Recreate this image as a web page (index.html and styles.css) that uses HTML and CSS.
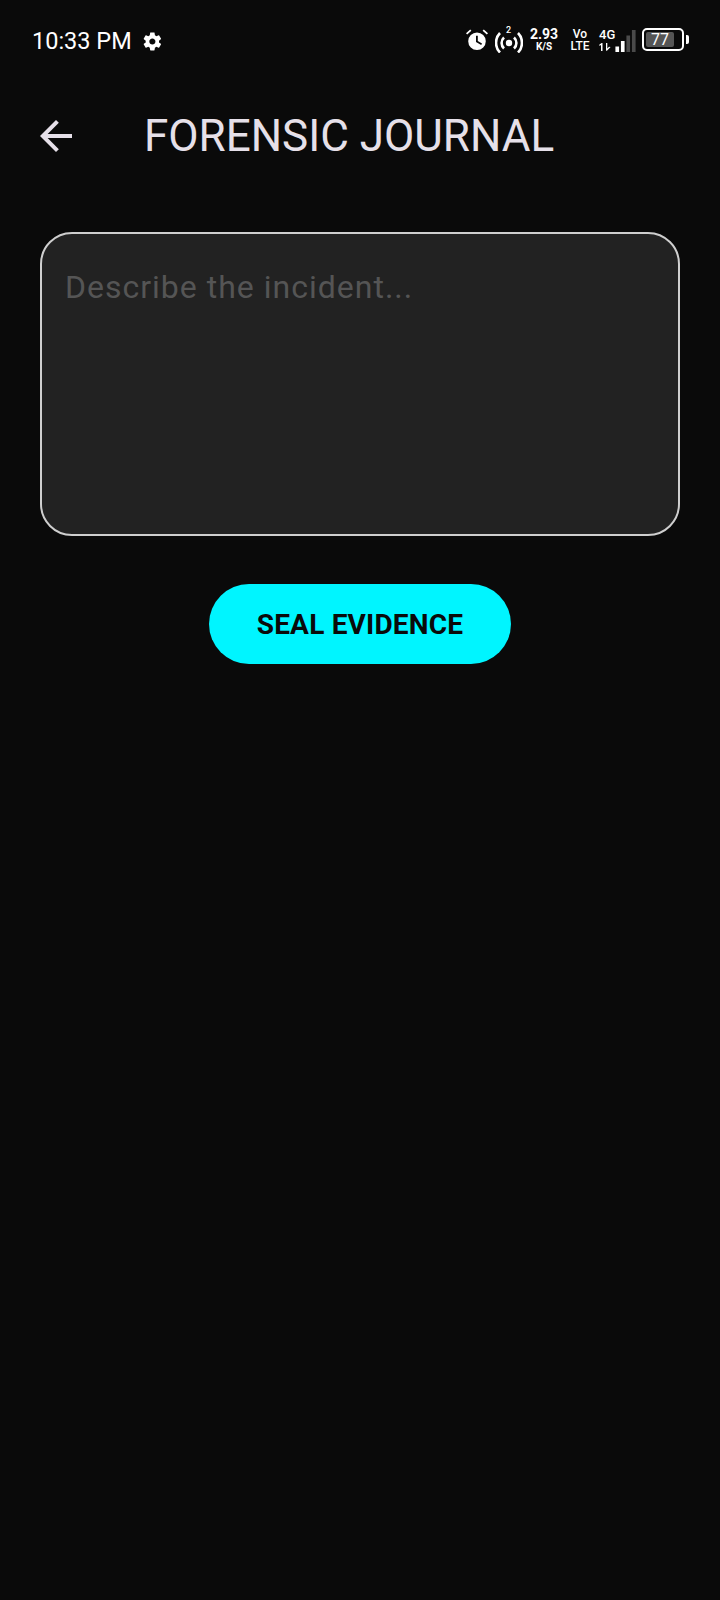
FILE: index.html
```html
<!DOCTYPE html>
<html lang="en">
<head>
    <meta charset="UTF-8">
    <title>Forensic Journal</title>
    <link rel="stylesheet" href="styles.css">
</head>
<body>
<div class="screen">
    <div class="status_bar">
        <div class="status_left">
            <span class="clock">10:33 PM</span>
            <svg class="gear" viewBox="0 0 24 24"><path d="M19.4 13c.05-.33.08-.66.08-1s-.03-.67-.08-1l2.15-1.68c.2-.15.25-.42.12-.64l-2.04-3.53c-.12-.22-.39-.3-.61-.22l-2.54 1.02c-.53-.4-1.1-.74-1.72-1l-.38-2.7C14.34 2.02 14.13 1.8 13.88 1.8H9.8c-.25 0-.46.22-.5.45l-.38 2.7c-.62.26-1.19.6-1.72 1L4.66 4.93c-.23-.09-.49 0-.61.22L2.01 8.68c-.13.22-.07.49.12.64L4.28 11c-.05.33-.08.67-.08 1s.03.67.08 1l-2.15 1.68c-.19.15-.25.42-.12.64l2.04 3.53c.12.22.38.3.61.22l2.54-1.02c.53.4 1.1.74 1.72 1l.38 2.7c.04.23.25.45.5.45h4.08c.25 0 .46-.22.5-.45l.38-2.7c.62-.26 1.19-.6 1.72-1l2.54 1.02c.23.09.49 0 .61-.22l2.04-3.53c.13-.22.07-.49-.12-.64L19.4 13zM11.84 15.5c-1.93 0-3.5-1.57-3.5-3.5s1.57-3.5 3.5-3.5 3.5 1.57 3.5 3.5-1.57 3.5-3.5 3.5z"/></svg>
        </div>
        <div class="status_right">
            <svg class="alarm" viewBox="0 0 22 22">
                <path d="M11 3.5a8.8 8.8 0 1 0 0 17.6 8.8 8.8 0 0 0 0-17.6zm4.2 12.6L10 13V6.8h1.8v5.1l4.2 2.6-.8 1.6z"/>
                <path d="M1.2 5.6 5.4 1.8 4.2.6 0 4.3zM20.8 5.6 16.6 1.8 17.8.6 22 4.3z"/>
            </svg>
            <div class="hotspot">
                <span class="hotspot_num">2</span>
                <svg viewBox="0 0 28 24">
                    <circle cx="14" cy="14" r="3.2"/>
                    <path class="arc" d="M9 8.5a7.5 7.5 0 0 0 0 11M19 8.5a7.5 7.5 0 0 1 0 11"/>
                    <path class="arc" d="M5 4a14 14 0 0 0 0 19.5M23 4a14 14 0 0 1 0 19.5"/>
                </svg>
            </div>
            <div class="stack speed">
                <span class="speed_num">2.93</span>
                <span class="speed_unit">K/S</span>
            </div>
            <div class="stack volte">
                <span>Vo</span>
                <span>LTE</span>
            </div>
            <div class="stack net">
                <span>4G</span>
                <svg class="updown" viewBox="0 0 12 8"><path d="M2 8V2L.4 3V1.6L2.6 0h.9v8zM7 0h1.3v5.4L10 3.8 11.6 4 7.7 8 7 7.2z"/></svg>
            </div>
            <svg class="signal" viewBox="0 0 22 24">
                <rect x="0" y="18" width="4" height="6" fill="#fff"/>
                <rect x="6" y="12" width="4" height="12" fill="#fff"/>
                <rect x="12" y="6" width="4" height="18" fill="#4a4a4a"/>
                <rect x="18" y="0" width="4" height="24" fill="#4a4a4a"/>
            </svg>
            <div class="battery">
                <div class="battery_body"><span class="battery_fill">77</span></div>
                <div class="battery_nub"></div>
            </div>
        </div>
    </div>

    <div class="app_bar">
        <svg class="back" viewBox="0 0 24 24"><path d="M20 11H7.83l5.59-5.59L12 4l-8 8 8 8 1.41-1.41L7.83 13H20v-2z"/></svg>
        <h1 class="title">FORENSIC JOURNAL</h1>
    </div>

    <div class="content">
        <div class="journal_input">
            <span class="placeholder">Describe the incident...</span>
        </div>
        <div class="seal_btn">SEAL EVIDENCE</div>
    </div>
</div>
</body>
</html>
```

FILE: styles.css
```css
*{margin: 0;padding: 0;box-sizing: border-box}
html,body{
    background: #0a0a0a;
}
.screen{
    width: 720px;
    height: 1600px;
    background: #0a0a0a;
    font-family: Roboto, "Liberation Sans", sans-serif;
    overflow: hidden;
}
.status_bar{
    height: 80px;
    padding: 2px 31px 0 32px;
    display: flex;
    align-items: center;
    justify-content: space-between;
    color: #fff;
}
.status_left{
    display: flex;
    align-items: center;
    gap: 10px;
}
.clock{
    font-size: 23.5px;
    line-height: 30px;
}
.gear{
    width: 21px;
    height: 21px;
    fill: #fff;
}
.status_right{
    display: flex;
    align-items: center;
    margin-bottom: 4px;
}
.alarm{
    width: 22px;
    height: 22px;
    fill: #fff;
    margin-top: 2px;
}
.hotspot{
    position: relative;
    width: 28px;
    height: 24px;
    margin-left: 7px;
    margin-top: 4px;
}
.hotspot svg{
    width: 28px;
    height: 24px;
    fill: #fff;
    display: block;
}
.hotspot .arc{
    fill: none;
    stroke: #fff;
    stroke-width: 2.6;
}
.hotspot_num{
    position: absolute;
    top: -4px;
    left: 11px;
    font-size: 9px;
    line-height: 10px;
    font-weight: 500;
}
.stack{
    display: flex;
    flex-direction: column;
    align-items: center;
    font-weight: 700;
}
.speed{
    width: 30px;
    margin-left: 6px;
}
.speed_num{
    font-size: 14px;
    line-height: 14px;
}
.speed_unit{
    font-size: 10px;
    line-height: 11px;
}
.volte{
    width: 22px;
    margin-left: 10px;
    margin-top: 2px;
    font-size: 12px;
    line-height: 12px;
    font-weight: 500;
}
.net{
    width: 18px;
    margin-left: 8px;
    font-size: 13px;
    line-height: 14px;
    font-weight: 500;
    align-items: flex-start;
}
.updown{
    width: 12px;
    height: 8px;
    fill: #fff;
    display: block;
    margin-top: 1px;
}
.signal{
    width: 21px;
    height: 22px;
    margin-left: -2px;
    margin-top: 3px;
}
.battery{
    display: flex;
    align-items: center;
    margin-left: 6px;
}
.battery_body{
    width: 42px;
    height: 23px;
    border: 2px solid #fff;
    border-radius: 5px;
    padding: 2px;
}
.battery_fill{
    display: block;
    width: 28px;
    height: 15px;
    background: #555;
    border-radius: 2px;
    font-size: 16px;
    line-height: 15px;
    text-align: center;
    color: #fff;
}
.battery_nub{
    width: 3px;
    height: 9px;
    background: #fff;
    border-radius: 0 2px 2px 0;
    margin-left: 2px;
}
.app_bar{
    height: 111px;
    padding-left: 32px;
    display: flex;
    align-items: center;
    color: #e6e0e9;
}
.back{
    width: 48px;
    height: 48px;
    fill: #e6e0e9;
    flex: none;
}
.title{
    font-size: 44px;
    font-weight: 400;
    line-height: 56px;
    margin-left: 64px;
}
.content{
    padding: 41px 40px 0 40px;
    display: flex;
    flex-direction: column;
    align-items: center;
}
.journal_input{
    width: 640px;
    height: 304px;
    background: #222222;
    border: 2px solid #cfcfcf;
    border-radius: 32px;
    padding: 33px 23px;
}
.placeholder{
    font-size: 32px;
    line-height: 40px;
    letter-spacing: 1px;
    color: #555555;
}
.seal_btn{
    width: 302px;
    height: 80px;
    margin-top: 48px;
    background: #00f5ff;
    border-radius: 40px;
    color: #0a0a0a;
    font-size: 28px;
    letter-spacing: 0.2px;
    font-weight: 700;
    display: flex;
    align-items: center;
    justify-content: center;
}
```
